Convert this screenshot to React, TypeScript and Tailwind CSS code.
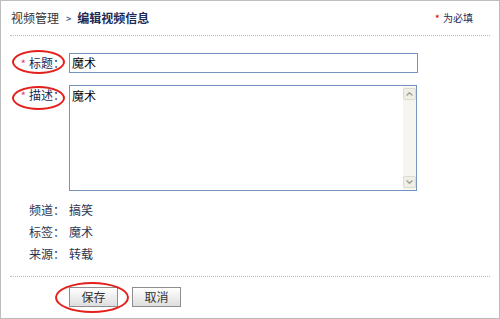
import React from "react";

const info = [
  { label: "频道：", value: "搞笑" },
  { label: "标签：", value: "魔术" },
  { label: "来源：", value: "转载" },
];

// red hand-drawn ring over a label / button
function Ring({ className }: { className: string }) {
  return <div className={"absolute rounded-[50%] border-2 border-[#e3201b] pointer-events-none " + className} />;
}

function Chevron({ up }: { up?: boolean }) {
  return (
    <svg width="7" height="4" viewBox="0 0 7 4" fill="none">
      <path
        d={up ? "M0.5 3.5L3.5 0.7L6.5 3.5" : "M0.5 0.5L3.5 3.3L6.5 0.5"}
        stroke="#9a9a90"
        strokeWidth="1.2"
      />
    </svg>
  );
}

export default function App() {
  return (
    <div className="w-[500px] h-[319px] bg-white border border-[#bdbdbd] font-['Noto_Sans_CJK_SC',sans-serif] text-[12px] leading-none text-[#222]">
      {/* Header */}
      <div className="mx-[9px] h-[35px] flex items-center border-b border-dotted border-[#b8b8b8]">
        <span className="pl-[1px] text-[#333]">视频管理</span>
        <span className="ml-[7px] mr-[6px] text-[9px] font-bold text-[#4a6a9a]">&gt;</span>
        <span className="font-bold text-[#1b2a57]">编辑视频信息</span>
        <span className="ml-auto mr-[17px] flex items-center gap-[3px]">
          <span className="text-[11px] text-[#e60000]">*</span>
          <span className="text-[10px] text-[#1b2a57]">为必填</span>
        </span>
      </div>

      {/* Required fields */}
      <div className="mt-[17px] flex items-center">
        <div className="relative w-[64px] h-[20px] flex items-center justify-end text-[#1b2a57]">
          <span className="mr-[3px] text-[11px] text-[#e8346a]">*</span>
          <span>标题：</span>
          <Ring className="left-[11px] top-[-3px] w-[53px] h-[24px]" />
        </div>
        <div className="ml-[4px] w-[349px] h-[20px] border border-[#7593bd] flex items-center pl-[2px] text-black">
          魔术
        </div>
      </div>

      <div className="mt-[12px] flex items-start">
        <div className="relative w-[64px] h-[20px] flex items-center justify-end text-[#1b2a57]">
          <span className="mr-[3px] text-[11px] text-[#e8346a]">*</span>
          <span>描述：</span>
          <Ring className="left-[11px] top-[1px] w-[53px] h-[24px]" />
        </div>
        <div className="ml-[4px] w-[348px] h-[106px] border border-[#7593bd] flex">
          <div className="flex-1 pl-[2px] pt-[4px] text-black">魔术</div>
          <div className="w-[13px] bg-[#f6f5ef] flex flex-col justify-between py-[2px]">
            <div className="h-[12px] border border-[#dcdbd0] bg-[#f0efe6] rounded-[2px] flex items-center justify-center">
              <Chevron up />
            </div>
            <div className="h-[12px] border border-[#dcdbd0] bg-[#f0efe6] rounded-[2px] flex items-center justify-center">
              <Chevron />
            </div>
          </div>
        </div>
      </div>

      {/* Read-only info */}
      <div className="mt-[8px] flex flex-col">
        {info.map((row) => (
          <div key={row.label} className="h-[22px] flex items-center text-[#2b3550]">
            <span className="w-[68px] pl-[28px]">{row.label}</span>
            <span>{row.value}</span>
          </div>
        ))}
      </div>

      {/* Actions */}
      <div className="mx-[9px] mt-[11px] border-t border-dotted border-[#b8b8b8]" />
      <div className="mt-[10px] flex items-center gap-[14px] pl-[68px]">
        <div className="relative">
          <button className="w-[49px] h-[20px] border border-[#8e8e8e] bg-gradient-to-b from-white to-[#dedede] text-[#333] leading-none">
            保存
          </button>
          <Ring className="left-[-14px] top-[-5px] w-[74px] h-[31px]" />
        </div>
        <button className="w-[49px] h-[20px] border border-[#8e8e8e] bg-gradient-to-b from-white to-[#dedede] text-[#333] leading-none">
          取消
        </button>
      </div>
    </div>
  );
}
